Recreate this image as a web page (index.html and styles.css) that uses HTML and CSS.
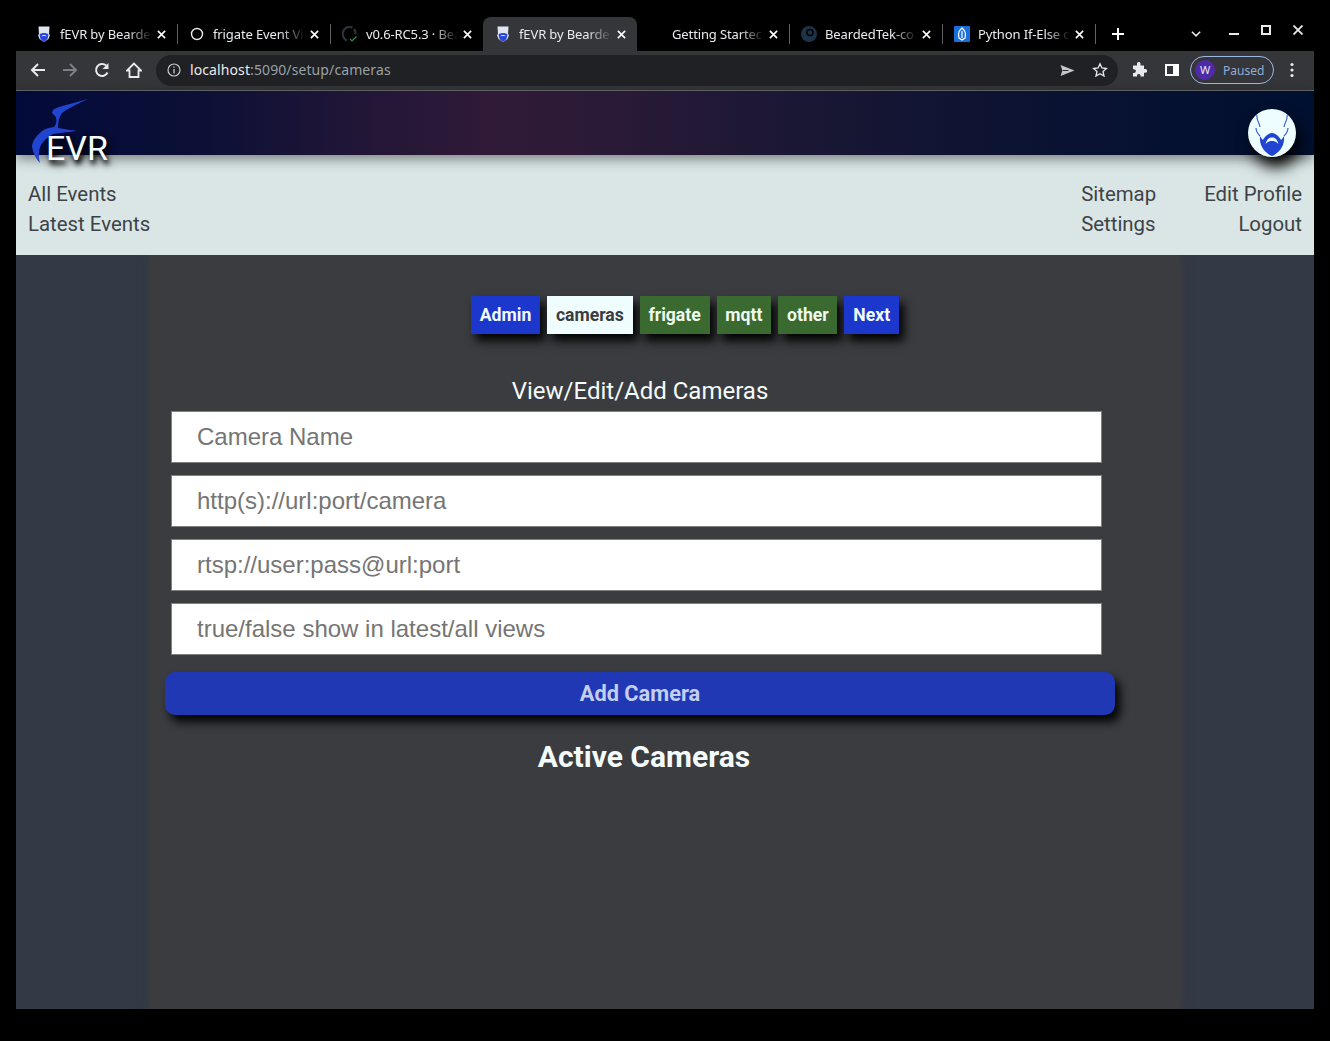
FILE: index.html
```html
<!DOCTYPE html>
<html lang="en">
<head>
<meta charset="utf-8">
<title>fEVR by BeardedTek</title>
<link rel="stylesheet" href="styles.css">
</head>
<body>
<div class="window">
  <div class="tabstrip">
    <div class="tab">
      <svg class="favicon" viewBox="0 0 16 16"><path d="M2.500.500h11l-.5 7.500 1 1-1.500 4L8 16l-4.500-3L2 9l1-1z" fill="#dfe6f2"/><path d="M3.500 8.500c1.500-2 7.500-2 9 0l-1 4.500L8 16l-3.500-3z" fill="#2a45d8"/><path d="M5.800 10c1-.8 3.400-.8 4.400 0" stroke="#dfe6f2" fill="none"/></svg>
      <span class="tab-title">fEVR by Bearde</span>
      <svg class="tab-close" viewBox="0 0 10 10"><path d="M1 1l8 8M9 1l-8 8" stroke="#fff" stroke-width="1.800"/></svg>
    </div>
    <div class="tab">
      <svg class="favicon" viewBox="0 0 16 16"><circle cx="8" cy="8" r="5.500" fill="none" stroke="#e8eaed" stroke-width="1.400"/></svg>
      <span class="tab-title">frigate Event Vi</span>
      <svg class="tab-close" viewBox="0 0 10 10"><path d="M1 1l8 8M9 1l-8 8" stroke="#fff" stroke-width="1.800"/></svg>
    </div>
    <div class="tab">
      <svg class="favicon" viewBox="0 0 16 16"><path d="M10.500 1.500A7 7 0 1 0 5 14.500" fill="none" stroke="#2c3237" stroke-width="2.400"/><path d="M12 3a7 7 0 0 1 1.500 5" fill="none" stroke="#2c3237" stroke-width="2.400"/><path d="M8 13l2 2 4.500-4.500" fill="none" stroke="#2f8f46" stroke-width="1.200"/></svg>
      <span class="tab-title">v0.6-RC5.3 · Bea</span>
      <svg class="tab-close" viewBox="0 0 10 10"><path d="M1 1l8 8M9 1l-8 8" stroke="#fff" stroke-width="1.800"/></svg>
    </div>
    <div class="tab tab-active">
      <svg class="favicon" viewBox="0 0 16 16"><path d="M2.500.500h11l-.5 7.500 1 1-1.500 4L8 16l-4.500-3L2 9l1-1z" fill="#dfe6f2"/><path d="M3.500 8.500c1.500-2 7.500-2 9 0l-1 4.500L8 16l-3.500-3z" fill="#2a45d8"/><path d="M5.800 10c1-.8 3.400-.8 4.400 0" stroke="#dfe6f2" fill="none"/></svg>
      <span class="tab-title">fEVR by Bearde</span>
      <svg class="tab-close" viewBox="0 0 10 10"><path d="M1 1l8 8M9 1l-8 8" stroke="#fff" stroke-width="1.800"/></svg>
    </div>
    <div class="tab">
      <span class="favicon"></span>
      <span class="tab-title">Getting Startec</span>
      <svg class="tab-close" viewBox="0 0 10 10"><path d="M1 1l8 8M9 1l-8 8" stroke="#fff" stroke-width="1.800"/></svg>
    </div>
    <div class="tab">
      <svg class="favicon" viewBox="0 0 16 16"><circle cx="8" cy="8" r="8" fill="#1c3348"/><circle cx="9" cy="6.500" r="3" fill="none" stroke="#000" stroke-width="1.600"/></svg>
      <span class="tab-title">BeardedTek-co</span>
      <svg class="tab-close" viewBox="0 0 10 10"><path d="M1 1l8 8M9 1l-8 8" stroke="#fff" stroke-width="1.800"/></svg>
    </div>
    <div class="tab">
      <svg class="favicon" viewBox="0 0 16 16"><rect width="16" height="16" rx="1" fill="#1a6fdc"/><path d="M8 2c3.500 3 4 7 3 10l-3 2-3-2C4 9 4.500 5 8 2zM8 5v7" fill="none" stroke="#fff" stroke-width="1.200"/></svg>
      <span class="tab-title">Python If-Else c</span>
      <svg class="tab-close" viewBox="0 0 10 10"><path d="M1 1l8 8M9 1l-8 8" stroke="#fff" stroke-width="1.800"/></svg>
    </div>
    <button class="newtab" type="button">
      <svg viewBox="0 0 14 14" width="14" height="14"><path d="M7 1v12M1 7h12" stroke="#fff" stroke-width="2"/></svg>
    </button>
    <div class="winctl">
      <span class="winbtn"><svg viewBox="0 0 12 8" width="11" height="8"><path d="M1 1.500l4.500 4.500L10 1.500" fill="none" stroke="#e8eaed" stroke-width="1.700"/></svg></span>
      <span class="winbtn winbtn-gap"><svg viewBox="0 0 10 10" width="10" height="10"><path d="M0 5h10" stroke="#e8eaed" stroke-width="2"/></svg></span>
      <span class="winbtn winbtn-up"><svg viewBox="0 0 10 10" width="10" height="10"><rect x="1" y="1" width="8" height="8" fill="none" stroke="#e8eaed" stroke-width="2"/></svg></span>
      <span class="winbtn winbtn-up"><svg viewBox="0 0 10 10" width="10" height="10"><path d="M.5.500l9 9M9.500.500l-9 9" stroke="#e8eaed" stroke-width="1.800"/></svg></span>
    </div>
  </div>

  <div class="toolbar">
    <span class="tool"><svg viewBox="0 0 16 16" width="16" height="16"><path d="M15 8H2M8 2L2 8l6 6" fill="none" stroke="#e8eaed" stroke-width="2"/></svg></span>
    <span class="tool"><svg viewBox="0 0 16 16" width="16" height="16"><path d="M1 8h13M8 2l6 6-6 6" fill="none" stroke="#7c7f83" stroke-width="2"/></svg></span>
    <span class="tool"><svg viewBox="0 0 16 16" width="16" height="16"><path d="M13.500 10.500A6 6 0 1 1 12.200 3.600" fill="none" stroke="#e8eaed" stroke-width="2"/><path d="M14.500 1v6h-6z" fill="#e8eaed"/></svg></span>
    <span class="tool"><svg viewBox="0 0 16 16" width="16" height="16"><path d="M8 1.500L1 8.500h2.500V15h9V8.500H15z" fill="none" stroke="#e8eaed" stroke-width="1.800"/></svg></span>
    <div class="omnibox">
      <svg class="omni-info" viewBox="0 0 14 14" width="14" height="14"><circle cx="7" cy="7" r="6" fill="none" stroke="#c4c7cb" stroke-width="1.200"/><path d="M7 6v4.500M7 3.500v1.300" stroke="#c4c7cb" stroke-width="1.300"/></svg>
      <span class="url"><span class="url-host">localhost</span>:5090/setup/cameras</span>
      <svg class="omni-send" viewBox="0 0 16 14" width="15" height="13"><path d="M.5 1l15 6-15 6 2-6z" fill="#c4c7cb"/><path d="M3 7h6" stroke="#202124" stroke-width="1"/></svg>
      <svg class="omni-star" viewBox="0 0 16 16" width="16" height="16"><path d="M8 1.800l1.900 4.200 4.500.5-3.400 3 1 4.500L8 11.700 4 14l1-4.500-3.400-3 4.500-.5z" fill="none" stroke="#e8eaed" stroke-width="1.300"/></svg>
    </div>
    <span class="tool tool-ext"><svg viewBox="0 0 16 16" width="16" height="16"><path d="M6 1.500a1.800 1.800 0 0 1 3.500 0V3.500H13V7h1.200a1.900 1.900 0 0 1 0 3.800H13V14.500H9.500v-1a1.800 1.800 0 0 0-3.500 0v1H2V11h1a1.900 1.900 0 0 0 0-3.800H2V3.500h4z" fill="#e8eaed"/></svg></span>
    <span class="tool"><svg viewBox="0 0 14 14" width="14" height="14"><path d="M0 1h14v12H0zM2 3v8h6V3z" fill="#fff" fill-rule="evenodd"/></svg></span>
    <div class="profile"><span class="avatar-w">W</span><span class="paused">Paused</span></div>
    <span class="tool"><svg viewBox="0 0 4 16" width="4" height="16"><circle cx="2" cy="2.500" r="1.600" fill="#e8eaed"/><circle cx="2" cy="8" r="1.600" fill="#e8eaed"/><circle cx="2" cy="13.500" r="1.600" fill="#e8eaed"/></svg></span>
  </div>

  <div class="page">
    <header class="site-header">
      <div class="logo">
        <svg class="logo-bird" viewBox="30 97 60 70" width="60" height="70"><path d="M88 99L70 104C62 106 55 108 53 110L52 113 56 117C57 121 56 125 54 127 48 128 44 129 41 132 35 137 32 142 32 147 33 153 36 159 40 163 38 155 39 149 41 145 44 140 48 137 53 134 60 133 68 132 77 131 70 130 64 129 58 128 58 122 59 117 62 113 68 108 78 104 88 99Z" fill="#2145d0"/></svg>
        <span class="logo-text">EVR</span>
      </div>
      <div class="profile-pic">
        <svg viewBox="0 0 48 48" width="48" height="48"><circle cx="24" cy="24" r="24" fill="#eefdff"/><path d="M9 6c-1 4 2 7 3 12M39 6c1 4-2 7-3 12M8 19c0 4 2 6 4 8M40 19c0 4-2 6-4 8" fill="none" stroke="#3152d4" stroke-width="1.100"/><path d="M12 27C13 29 14 30 15 31 17 27 21 24 24 24 27 24 31 27 33 31 34 30 35 29 36 27 37 37 31 44 24 47 17 44 11 37 12 27ZM17.500 35C19 30 21 28.500 24 28.500 27 28.500 29 30 30.500 35 28 32.500 26 32 24 32 22 32 20 32.500 17.500 35Z" fill="#2145d0" fill-rule="evenodd"/></svg>
      </div>
    </header>

    <nav class="site-nav">
      <div class="nav-col">
        <a class="nav-link">All Events</a>
        <a class="nav-link">Latest Events</a>
      </div>
      <div class="nav-right">
        <div class="nav-col">
          <a class="nav-link">Sitemap</a>
          <a class="nav-link">Settings</a>
        </div>
        <div class="nav-col nav-col-end">
          <a class="nav-link">Edit Profile</a>
          <a class="nav-link">Logout</a>
        </div>
      </div>
    </nav>

    <main class="content">
      <div class="steps">
        <a class="step step-blue">Admin</a>
        <a class="step step-active">cameras</a>
        <a class="step step-green">frigate</a>
        <a class="step step-green">mqtt</a>
        <a class="step step-green">other</a>
        <a class="step step-blue">Next</a>
      </div>
      <h2 class="form-title">View/Edit/Add Cameras</h2>
      <form class="camera-form">
        <input class="field" type="text" placeholder="Camera Name">
        <input class="field" type="text" placeholder="http(s)://url:port/camera">
        <input class="field" type="text" placeholder="rtsp://user:pass@url:port">
        <input class="field" type="text" placeholder="true/false show in latest/all views">
        <button class="add-btn" type="button">Add Camera</button>
      </form>
      <h1 class="active-title">Active Cameras</h1>
    </main>
  </div>
</div>
</body>
</html>
```
FILE: styles.css
```css
* { box-sizing: border-box; }
html, body { height: 100%; }
body {
  margin: 0;
  background: #000;
  padding: 17px 16px 32px;
  font-family: "Roboto", "Liberation Sans", sans-serif;
}
.window {
  height: 992px;
  display: flex;
  flex-direction: column;
  overflow: hidden;
}

/* Browser chrome */
.tabstrip {
  height: 34px;
  flex: none;
  display: flex;
  padding-left: 8px;
  background: #000;
  font-family: "Noto Sans", sans-serif;
}
.tab {
  position: relative;
  width: 153px;
  display: flex;
  align-items: center;
  padding: 0 11px 0 12px;
  color: #e8eaed;
  font-size: 13px;
  letter-spacing: -.12px;
}
.tab::after {
  content: "";
  position: absolute;
  right: -1px;
  top: 7px;
  height: 20px;
  border-right: 1px solid #5f6368;
}
.tab:nth-child(3)::after, .tab-active::after { display: none; }
.tab-active {
  background: #35363a;
  border-radius: 8px 8px 0 0;
  width: 154px;
  margin-right: -1px;
}
.favicon { width: 16px; height: 16px; flex: none; margin-right: 8px; display: block; }
.tab-title {
  flex: 1;
  min-width: 0;
  white-space: nowrap;
  overflow: hidden;
  -webkit-mask-image: linear-gradient(90deg, #000 72%, transparent 98%);
  mask-image: linear-gradient(90deg, #000 72%, transparent 98%);
}
.tab-close { width: 9px; height: 9px; flex: none; margin-left: 3px; }
.newtab {
  width: 32px;
  margin-left: 7px;
  padding: 0;
  border: 0;
  background: none;
  display: flex;
  align-items: center;
  justify-content: center;
}
.winctl { margin-left: auto; display: flex; }
.winbtn { width: 32px; display: flex; align-items: center; justify-content: center; }
.winbtn-gap { margin-left: 6px; }
.winbtn-up { padding-bottom: 8px; }

.toolbar {
  height: 40px;
  flex: none;
  display: flex;
  align-items: center;
  padding: 0 6px 1px;
  background: #35363a;
  border-bottom: 1px solid #6a6b6e;
}
.tool { width: 32px; display: flex; align-items: center; justify-content: center; flex: none; }
.tool-ext { margin-left: 6px; padding-right: 2px; }
.omnibox {
  flex: 1;
  height: 31px;
  margin-left: 6px;
  display: flex;
  align-items: center;
  padding: 0 10px 0 11px;
  background: #202124;
  border-radius: 16px;
}
.omni-info { margin-right: 9px; }
.url {
  flex: 1;
  margin-top: -2px;
  font: 14px "Noto Sans", sans-serif;
  letter-spacing: .1px;
  color: #9aa0a6;
}
.url-host { color: #e8eaed; }
.omni-star { margin-left: 17px; }
.profile {
  width: 84px;
  height: 28px;
  margin: 0 2px;
  display: flex;
  align-items: center;
  padding-left: 4px;
  flex: none;
  border: 1px solid #9db8e6;
  border-radius: 14px;
  font-family: "Noto Sans", sans-serif;
}
.avatar-w {
  width: 20px;
  height: 20px;
  border-radius: 50%;
  background: #4f2aa8;
  color: #e8eaed;
  font-size: 11px;
  line-height: 20px;
  text-align: center;
  margin-right: 8px;
}
.paused { font-size: 12px; color: #93add6; }

/* Page */
.page {
  flex: 1;
  display: flex;
  flex-direction: column;
  background: #323a45;
}
.site-header {
  position: relative;
  z-index: 2;
  height: 64px;
  flex: none;
  background: linear-gradient(90deg, #020a3a 0%, #0c1036 14%, #271737 30%, #301a37 37%, #2a1a37 46%, #1a1734 60%, #0a1232 80%, #001030 100%);
  box-shadow: 0 4px 12px rgba(0, 0, 0, .45);
}
.logo { position: absolute; left: 14px; top: 6px; width: 90px; height: 70px; }
.logo-bird { display: block; }
.logo-text {
  position: absolute;
  left: 16px;
  top: 31px;
  font-size: 34px;
  line-height: 40px;
  color: #f6fcff;
  text-shadow: 2px 4px 5px #000, 2px 4px 9px rgba(0, 0, 0, .7);
}
.profile-pic {
  position: absolute;
  right: 18px;
  top: 18px;
  width: 48px;
  height: 48px;
  border-radius: 50%;
  box-shadow: 4px 10px 16px #000;
}
.profile-pic svg { display: block; }
.site-nav {
  position: relative;
  z-index: 1;
  height: 100px;
  flex: none;
  display: flex;
  justify-content: space-between;
  padding: 24px 12px 16px;
  background: #dae6e6;
}
.nav-right { display: flex; gap: 48px; }
.nav-col { display: flex; flex-direction: column; }
.nav-col-end { align-items: flex-end; }
.nav-link { font-size: 20.4px; line-height: 30px; color: #3d4347; }

.content {
  flex: 1;
  width: 1032px;
  margin-left: 133px;
  padding: 41px 66px 0 16px;
  background: #3b3c40;
  box-shadow: 0 0 10px #3b3c40;
}
.steps { display: flex; gap: 7px; padding-left: 306px; }
.step {
  height: 38px;
  padding: 0 8.8px;
  font-size: 17.6px;
  font-weight: 700;
  line-height: 38px;
  box-shadow: 5px 7px 9px rgba(0, 0, 0, .95);
}
.step-blue { background: #1b37cc; color: #f2fbff; }
.step-green { background: #3b6a31; color: #f0fbf0; }
.step-active { background: #effdff; color: #3b3c40; }
.form-title {
  margin: 43px 0 6px;
  font-size: 24px;
  font-weight: 400;
  line-height: 28px;
  text-align: center;
  color: #f4fbfb;
}
.camera-form { display: flex; flex-direction: column; }
.field {
  width: 931px;
  height: 52px;
  margin: 0 0 12px 6px;
  padding: 0 25px;
  border: 1px solid #808080;
  background: #fff;
  border-radius: 0;
  font: 24px "Liberation Sans", sans-serif;
  color: #333;
}
.field::placeholder { color: #757575; opacity: 1; }
.add-btn {
  height: 43px;
  margin-top: 5px;
  border: 0;
  border-radius: 10px;
  background: #2038b4;
  color: #c3cff0;
  font: 700 21.8px "Roboto", sans-serif;
  box-shadow: 5px 7px 10px rgba(0, 0, 0, .95);
}
.active-title {
  margin: 24px 0 0;
  padding-left: 8px;
  font-size: 30px;
  font-weight: 700;
  line-height: 36px;
  text-align: center;
  color: #f4fbfb;
}
```
